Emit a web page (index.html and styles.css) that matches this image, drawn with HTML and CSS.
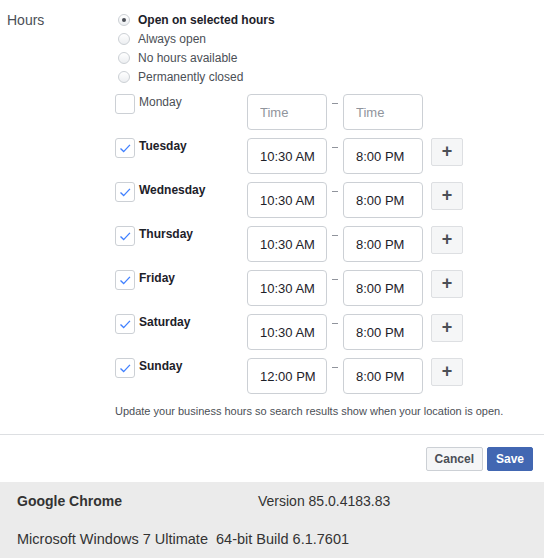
FILE: index.html
```html
<!DOCTYPE html>
<html>
<head>
<meta charset="utf-8">
<link rel="stylesheet" href="styles.css">
</head>
<body>
<div class="form">
  <div class="field">
    <div class="field-label">Hours</div>
    <div class="field-body">
      <div class="radios">
        <div class="radio"><span class="radio-dot checked"></span><span class="radio-text selected">Open on selected hours</span></div>
        <div class="radio"><span class="radio-dot"></span><span class="radio-text">Always open</span></div>
        <div class="radio"><span class="radio-dot"></span><span class="radio-text">No hours available</span></div>
        <div class="radio"><span class="radio-dot"></span><span class="radio-text">Permanently closed</span></div>
      </div>
      <div class="days">
        <div class="day">
          <div class="day-check"><span class="box"></span><span class="day-name">Monday</span></div>
          <input class="time" placeholder="Time"><span class="dash"></span><input class="time" placeholder="Time">
        </div>
        <div class="day">
          <div class="day-check"><span class="box"><svg viewBox="0 0 20 20"><path d="M5 10.5 L8.5 14 L15.5 6.5"/></svg></span><span class="day-name on">Tuesday</span></div>
          <input class="time" value="10:30 AM"><span class="dash"></span><input class="time" value="8:00 PM"><button class="plus">+</button>
        </div>
        <div class="day">
          <div class="day-check"><span class="box"><svg viewBox="0 0 20 20"><path d="M5 10.5 L8.5 14 L15.5 6.5"/></svg></span><span class="day-name on">Wednesday</span></div>
          <input class="time" value="10:30 AM"><span class="dash"></span><input class="time" value="8:00 PM"><button class="plus">+</button>
        </div>
        <div class="day">
          <div class="day-check"><span class="box"><svg viewBox="0 0 20 20"><path d="M5 10.5 L8.5 14 L15.5 6.5"/></svg></span><span class="day-name on">Thursday</span></div>
          <input class="time" value="10:30 AM"><span class="dash"></span><input class="time" value="8:00 PM"><button class="plus">+</button>
        </div>
        <div class="day">
          <div class="day-check"><span class="box"><svg viewBox="0 0 20 20"><path d="M5 10.5 L8.5 14 L15.5 6.5"/></svg></span><span class="day-name on">Friday</span></div>
          <input class="time" value="10:30 AM"><span class="dash"></span><input class="time" value="8:00 PM"><button class="plus">+</button>
        </div>
        <div class="day">
          <div class="day-check"><span class="box"><svg viewBox="0 0 20 20"><path d="M5 10.5 L8.5 14 L15.5 6.5"/></svg></span><span class="day-name on">Saturday</span></div>
          <input class="time" value="10:30 AM"><span class="dash"></span><input class="time" value="8:00 PM"><button class="plus">+</button>
        </div>
        <div class="day">
          <div class="day-check"><span class="box"><svg viewBox="0 0 20 20"><path d="M5 10.5 L8.5 14 L15.5 6.5"/></svg></span><span class="day-name on">Sunday</span></div>
          <input class="time" value="12:00 PM"><span class="dash"></span><input class="time" value="8:00 PM"><button class="plus">+</button>
        </div>
      </div>
      <p class="note">Update your business hours so search results show when your location is open.</p>
    </div>
  </div>
  <div class="actions">
    <button class="btn cancel">Cancel</button>
    <button class="btn save">Save</button>
  </div>
</div>
<div class="sysinfo">
  <div class="sys-row"><span class="sys-name">Google Chrome</span><span>Version 85.0.4183.83</span></div>
  <div class="sys-row os">Microsoft Windows 7 Ultimate&nbsp; 64-bit Build 6.1.7601</div>
</div>
</body>
</html>
```
FILE: styles.css
```css
* { box-sizing: border-box; }
html, body { margin: 0; padding: 0; background: #fff; }
body {
  font-family: "Liberation Sans", Arial, sans-serif;
  color: #1d2129;
  width: 544px;
  height: 558px;
  overflow: hidden;
}
.field {
  display: flex;
  padding: 10px 0 16px 7px;
  border-bottom: 1px solid #dddfe2;
}
.field-label {
  width: 108px;
  flex: none;
  font-size: 14px;
  line-height: 18px;
  margin-top: 1px;
  color: #4b4f56;
}
.field-body { flex: 1; }
.radios { display: flex; flex-direction: column; }
.radio {
  display: flex;
  align-items: center;
  height: 19px;
  font-size: 12px;
}
.radio-dot {
  width: 12px;
  height: 12px;
  margin-left: 3px;
  margin-right: 8px;
  border-radius: 50%;
  border: 1px solid #ccd0d5;
  background: linear-gradient(#fff, #eceef1);
  position: relative;
  flex: none;
}
.radio-dot.checked::after {
  content: "";
  position: absolute;
  left: 3px;
  top: 3px;
  width: 4px;
  height: 4px;
  border-radius: 50%;
  background: #4b4f56;
}
.radio-text { color: #4b4f56; }
.radio-text.selected { color: #1d2129; font-weight: bold; }
.days {
  margin-top: 8px;
  display: flex;
  flex-direction: column;
  gap: 8px;
}
.day {
  display: flex;
  align-items: flex-start;
  height: 36px;
}
.day-check {
  width: 132px;
  flex: none;
  display: flex;
  align-items: flex-start;
}
.box {
  width: 20px;
  height: 20px;
  border: 1px solid #ccd0d5;
  border-radius: 3px;
  background: #fff;
  flex: none;
  display: flex;
}
.box svg {
  width: 18px;
  height: 18px;
  fill: none;
  stroke: #4080ff;
  stroke-width: 1.5;
}
.day-name {
  margin-left: 4px;
  font-size: 12px;
  line-height: 16px;
  color: #4b4f56;
}
.day-name.on { font-weight: bold; color: #1d2129; }
.time {
  width: 80px;
  height: 36px;
  border: 1px solid #ccd0d5;
  border-radius: 4px;
  padding: 0 0 0 12px;
  font-family: "Liberation Sans", Arial, sans-serif;
  font-size: 13px;
  color: #1d2129;
  background: #fff;
  outline: none;
  margin: 0;
}
.time::placeholder { color: #90949c; }
.dash {
  width: 16px;
  height: 36px;
  position: relative;
  flex: none;
}
.dash::before {
  content: "";
  position: absolute;
  left: 5px;
  top: 9px;
  width: 6px;
  height: 1px;
  background: #90949c;
}
.plus {
  margin: 0 0 0 8px;
  width: 32px;
  height: 28px;
  border: 1px solid #dddfe2;
  border-radius: 2px;
  background: #f5f6f7;
  color: #4b4f56;
  font-family: "Liberation Sans", Arial, sans-serif;
  font-size: 18px;
  font-weight: bold;
  line-height: 24px;
  padding: 0 0 2px;
}
.note {
  margin: 10px 0 0;
  font-size: 11px;
  line-height: 14px;
  color: #4b4f56;
}
.actions {
  display: flex;
  justify-content: flex-end;
  gap: 4px;
  padding: 12px 11px 11px;
}
.btn {
  height: 24px;
  margin: 0;
  padding: 0 8px;
  border-radius: 2px;
  font-family: "Liberation Sans", Arial, sans-serif;
  font-size: 12px;
  font-weight: bold;
  line-height: 22px;
}
.cancel {
  background: #f5f6f7;
  border: 1px solid #ccd0d5;
  color: #4b4f56;
}
.save {
  background: #4267b2;
  border: 1px solid #4267b2;
  color: #fff;
}
.sysinfo {
  background: #ebebeb;
  height: 76px;
  padding: 10px 17px 0;
  font-size: 14px;
  line-height: 18px;
  color: #333;
}
.sys-row { display: flex; }
.sys-name { width: 241px; font-weight: bold; }
.sys-row.os { margin-top: 20px; font-size: 14.5px; }
```
